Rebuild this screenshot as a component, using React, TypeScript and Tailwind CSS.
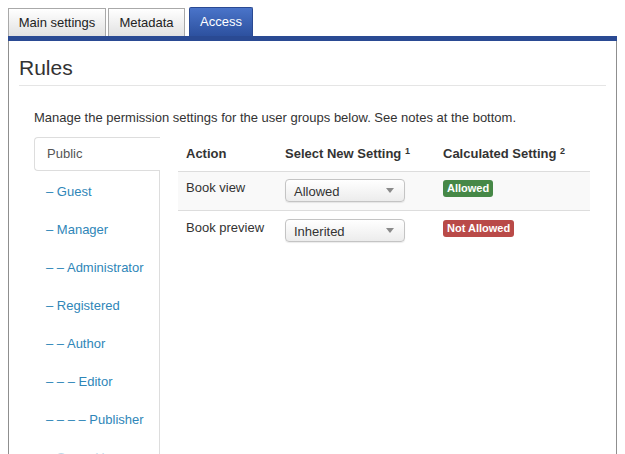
import React from "react";

const groups = [
  "– Guest",
  "– Manager",
  "– – Administrator",
  "– Registered",
  "– – Author",
  "– – – Editor",
  "– – – – Publisher",
];

function Select({ value }: { value: string }) {
  return (
    <div className="flex h-[23px] w-[120px] items-center justify-between rounded-[4px] border border-[#c4c4c4] bg-gradient-to-b from-white to-[#ececec] pl-[8px] pr-[10px] text-[13px] text-[#333] shadow-[0_1px_1px_rgba(0,0,0,0.08)]">
      <span className="mt-[2px]">{value}</span>
      <svg width="8" height="5" viewBox="0 0 8 5">
        <path d="M0 0h8L4 5z" fill="#8a8a8a" />
      </svg>
    </div>
  );
}

export default function App() {
  return (
    <div className="h-[454px] w-[625px] overflow-hidden bg-white font-['Liberation_Sans',Arial,sans-serif] text-[13px] text-[#333]">
      <div className="flex items-end gap-[2px] pl-[8px] pt-[7px]">
        <div className="flex h-[28px] w-[98px] items-center justify-center border border-b-0 border-[#a9a9a9] bg-gradient-to-b from-white to-[#e2e2e2] text-[13px] text-[#222]">
          Main settings
        </div>
        <div className="flex h-[28px] w-[77px] items-center justify-center border border-b-0 border-[#a9a9a9] bg-gradient-to-b from-white to-[#e2e2e2] text-[13px] text-[#222]">
          Metadata
        </div>
        <div className="ml-[2px] flex h-[29px] w-[64px] items-center justify-center rounded-t-[2px] border border-b-0 border-[#2a4a93] bg-gradient-to-b from-[#4a74c9] to-[#2d519f] text-[13px] text-white">
          Access
        </div>
      </div>
      <div className="ml-[8px] h-[5px] w-[609px] bg-[#2a4a93]" />
      <div className="ml-[8px] h-[420px] w-[609px] border-x border-[#8f8f8f] px-[10px]">
        <h2 className="pt-[14px] text-[21px] leading-[26px] text-[#333]">Rules</h2>
        <div className="mt-[4px] h-px bg-[#e5e5e5]" />
        <p className="mt-[24px] pl-[15px] leading-[16px]">
          Manage the permission settings for the user groups below. See notes at the bottom.
        </p>
        <div className="mt-[11px] flex pl-[15px]">
          <div className="w-[126px] shrink-0">
            <div className="flex h-[34px] items-center rounded-l-[4px] border border-r-0 border-[#ddd] pl-[12px] text-[#555]">
              Public
            </div>
            <div className="h-[300px] border-r border-[#ddd] pt-[2px]">
              {groups.map((g) => (
                <div key={g} className="flex h-[38px] items-center pl-[12px] text-[#2f86b8]">
                  {g}
                </div>
              ))}
              <div className="flex h-[38px] items-center pl-[12px] text-[#2f86b8] opacity-30">
                – Super Users
              </div>
            </div>
          </div>
          <div className="ml-[18px] w-[412px]">
            <div className="flex h-[34px] items-center font-bold text-[#333]">
              <div className="w-[107px] pl-[8px]">Action</div>
              <div className="w-[158px]">
                Select New Setting <sup className="text-[9px]">1</sup>
              </div>
              <div>
                Calculated Setting <sup className="text-[9px]">2</sup>
              </div>
            </div>
            <div className="flex h-[39px] border-t border-[#ddd] bg-[#f9f9f9] pt-[8px]">
              <div className="w-[107px] pl-[8px] leading-[16px]">Book view</div>
              <div className="-mt-[1px] w-[158px]">
                <Select value="Allowed" />
              </div>
              <div className="-mt-[2px]">
                <span className="inline-flex h-[17px] items-center rounded-[3px] bg-[#468847] px-[4px] text-[11px] font-bold text-white">
                  Allowed
                </span>
              </div>
            </div>
            <div className="flex h-[41px] border-t border-[#ddd] pt-[9px]">
              <div className="w-[107px] pl-[8px] leading-[16px]">Book preview</div>
              <div className="-mt-[1px] w-[158px]">
                <Select value="Inherited" />
              </div>
              <div className="-mt-[2px]">
                <span className="inline-flex h-[17px] items-center rounded-[3px] bg-[#b94a48] px-[4px] text-[11px] font-bold text-white">
                  Not Allowed
                </span>
              </div>
            </div>
          </div>
        </div>
      </div>
    </div>
  );
}
